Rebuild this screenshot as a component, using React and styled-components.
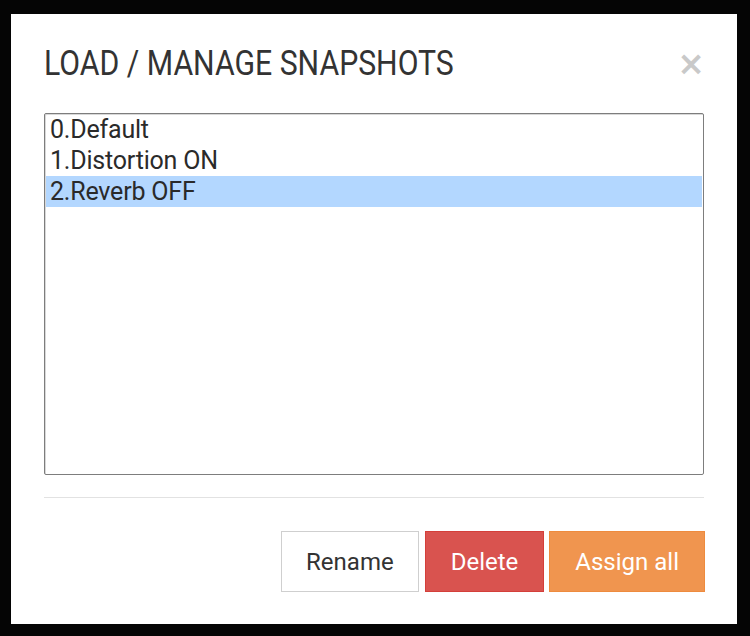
import React, { useState } from "react";
import styled, { createGlobalStyle } from "styled-components";

const GlobalStyle = createGlobalStyle`
  html, body {
    margin: 0;
    padding: 0;
    background: #050505;
  }
  body {
    font-family: Roboto, "Liberation Sans", sans-serif;
    color: #333;
  }
`;

const Backdrop = styled.div`
  width: 750px;
  height: 636px;
  padding: 14px 13px 12px 11px;
  box-sizing: border-box;
  display: flex;
`;

const Dialog = styled.div`
  flex: 1;
  background: #fff;
  padding: 0 33px;
  display: flex;
  flex-direction: column;
`;

const Header = styled.div`
  display: flex;
  align-items: center;
  justify-content: space-between;
  height: 99px;
  padding-top: 1px;
  box-sizing: border-box;
`;

const Title = styled.h3`
  margin: 0;
  font-family: Roboto, sans-serif;
  font-weight: 400;
  font-size: 35px;
  line-height: 40px;
  color: #333;
  transform: scaleX(0.863);
  transform-origin: left center;
  white-space: nowrap;
`;

const Close = styled.button`
  border: none;
  background: none;
  padding: 0;
  margin-right: -1px;
  font-family: "DejaVu Sans", sans-serif;
  font-weight: 700;
  font-size: 33px;
  line-height: 30px;
  color: #c9c9c9;
  cursor: pointer;
`;

const List = styled.div`
  height: 362px;
  border: 1px solid #7d7d7d;
  border-radius: 2px;
  box-shadow: inset 1px 1px 0 #d8d8d8;
  padding: 0 1px;
  box-sizing: border-box;
`;

const Item = styled.div`
  height: 31px;
  line-height: 31px;
  padding-left: 4px;
  font-size: 25px;
  letter-spacing: -0.2px;
  color: #2a2a2a;
  background: ${(p) => (p.$selected ? "#b3d7ff" : "transparent")};
  cursor: default;
`;

const Divider = styled.hr`
  margin: 22px 0 0;
  border: none;
  border-top: 1px solid #e2e2e2;
`;

const Footer = styled.div`
  display: flex;
  justify-content: flex-end;
  gap: 5px;
  margin-top: 33px;
  margin-right: -1px;
`;

const Button = styled.button`
  height: 61px;
  padding: 0 ${(p) => p.$pad || 25}px;
  margin-right: ${(p) => p.$gapAfter || 0}px;
  font-family: Roboto, sans-serif;
  font-size: 24px;
  border: 1px solid ${(p) => p.$border};
  background: ${(p) => p.$bg};
  color: ${(p) => p.$color};
  cursor: pointer;
`;

const snapshots = ["0.Default", "1.Distortion ON", "2.Reverb OFF"];

export default function App() {
  const [selected, setSelected] = useState(2);

  return (
    <>
      <GlobalStyle />
      <Backdrop>
        <Dialog>
          <Header>
            <Title>LOAD / MANAGE SNAPSHOTS</Title>
            <Close>×</Close>
          </Header>
          <List>
            {snapshots.map((s, i) => (
              <Item key={s} $selected={i === selected} onClick={() => setSelected(i)}>
                {s}
              </Item>
            ))}
          </List>
          <Divider />
          <Footer>
            <Button $bg="#fff" $border="#cfcfcf" $color="#333" $pad={24} $gapAfter={1}>
              Rename
            </Button>
            <Button $bg="#d9534f" $border="#d43f3a" $color="#fff">
              Delete
            </Button>
            <Button $bg="#f0954f" $border="#ee8b3e" $color="#fff">
              Assign all
            </Button>
          </Footer>
        </Dialog>
      </Backdrop>
    </>
  );
}
